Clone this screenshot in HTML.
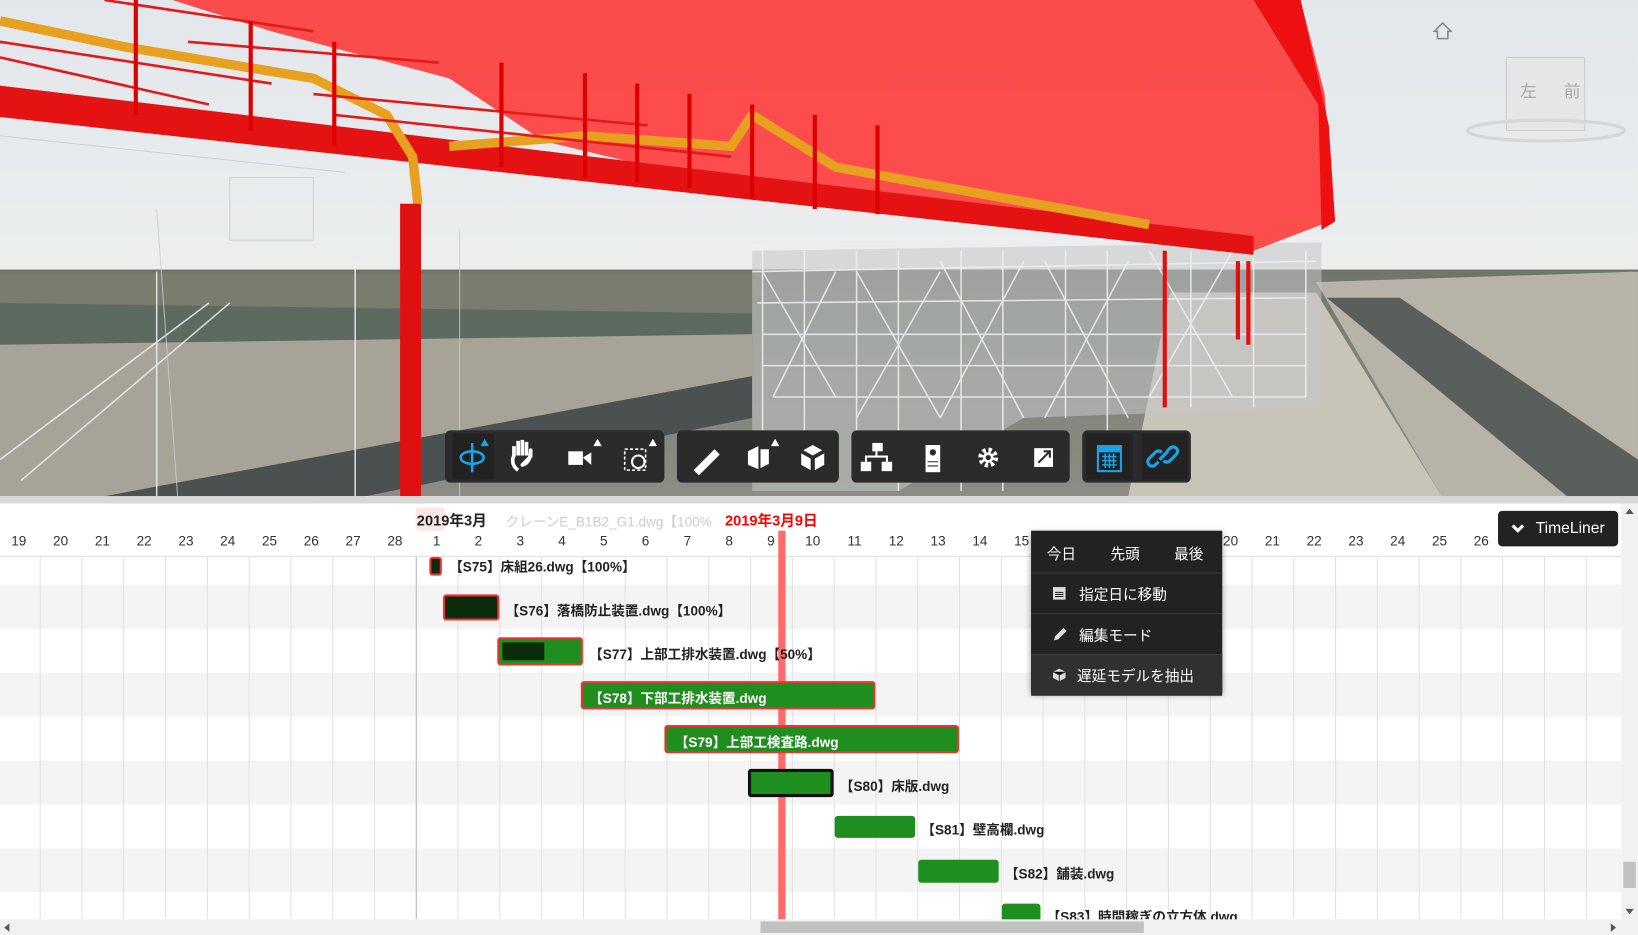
<!DOCTYPE html>
<html><head><meta charset="utf-8">
<style>
html,body{margin:0;padding:0;width:1638px;height:935px;overflow:hidden;background:#fff;font-family:"Liberation Sans","Noto Sans CJK JP",sans-serif}
#w{position:absolute;left:0;top:0;width:1568px;height:895px;transform:scale(1.04464,1.04469);transform-origin:0 0;overflow:hidden}
.abs{position:absolute}
.tb{position:absolute;top:412px;height:50px;background:#2b2b2b;border-radius:5px}
.day{position:absolute;top:510px;width:40px;text-align:center;font-size:13px;color:#333}
.vl{position:absolute;top:533px;height:347px;width:1px;background:#e2e2e2}
.row{position:absolute;left:0;width:1552px;height:42px}
.bar{position:absolute;box-sizing:border-box;border-radius:3px}
.lbl{position:absolute;font-size:13px;font-weight:bold;color:#222;white-space:nowrap}
.menu{position:absolute;left:987px;top:508px;width:183px;height:155px;background:#222;box-shadow:0 2px 6px rgba(0,0,0,.4);color:#fff;font-size:14px}
.mi{position:absolute;left:0;width:183px;height:39px;border-top:1px solid #3c3c3c}
</style></head><body><div id="w">
<svg class="abs" style="left:0;top:0" width="1568" height="475" viewBox="0 0 1568 475">
<defs>
<linearGradient id="sky" x1="0" y1="0" x2="0" y2="1"><stop offset="0" stop-color="#e2e7ec"/><stop offset="1" stop-color="#eceeee"/></linearGradient>
<linearGradient id="gr" x1="0" y1="0" x2="0" y2="1"><stop offset="0" stop-color="#6f746a"/><stop offset="0.4" stop-color="#7e8478"/><stop offset="1" stop-color="#8c8c84"/></linearGradient>
</defs>
<rect width="1568" height="262" fill="url(#sky)"/>
<rect y="258" width="1568" height="217" fill="url(#gr)"/>
<polygon points="0,262 720,262 720,300 0,290" fill="#7a7c70"/>
<polygon points="0,290 720,300 720,330 0,330" fill="#5c6a60"/>
<polygon points="0,330 720,320 720,380 300,475 0,475" fill="#a8a398"/>
<polygon points="100,475 720,360 720,400 350,475" fill="#4b5150"/>
<polygon points="1260,270 1568,260 1568,475 1380,475" fill="#b7b3a8"/>
<polygon points="1270,285 1340,285 1568,440 1568,475 1500,475" fill="#5b5f5c"/>
<polygon points="1120,280 1260,280 1380,475 1080,475" fill="#c9c4b8"/>
<polygon points="720,240 1265,232 1265,390 980,400 860,470 720,470" fill="#c4c6c8" opacity="0.55"/>
<g stroke="#eef0f4" stroke-width="1.5" fill="none" opacity="0.85">
<path d="M720 235 L1260 228 M720 260 L1260 250 M725 290 L1250 285 M730 320 L1250 320 M730 350 L1250 350 M740 380 L1250 380"/>
<path d="M730 260 L800 380 M800 260 L740 380 M820 260 L900 400 M900 260 L820 400 M900 250 L980 400 M980 250 L900 400 M1000 250 L1080 400 M1080 250 L1000 400 M1100 240 L1180 380 M1180 240 L1100 380"/>
<path d="M730 240 V460 M770 240 V460 M820 240 V460 M860 240 V470 M920 240 V470 M960 240 V470 M1020 240 V400 M1060 240 V420 M1140 240 V390 M1200 240 V390 M1250 240 V380"/>
<path d="M0 440 l200 -150 M20 460 l200-170 M150 260 V475 M340 250 V475"/>
</g>
<g stroke="#c8ccd0" stroke-width="1" fill="none" opacity="0.8">
<path d="M0 100 L380 150 M0 130 L330 165 M220 170 H300 V230 H220Z M150 200 L170 475 M440 220 V475"/>
</g>
<polygon points="165,0 1245,0 1268,90 1278,210 1200,240 700,178 520,135 430,75 260,30" fill="#ff3030" opacity="0.85"/>
<polygon points="1200,0 1245,0 1272,120 1278,212 1265,220 1262,100" fill="#ee1010"/>
<polygon points="0,82 1200,226 1200,244 0,112" fill="#e41212"/>
<path d="M0 20 L120 45 L300 75 L370 110 L395 150 L400 195 M430 140 L560 130 L700 140 L720 110 L800 160 L1100 215" stroke="#e8a020" stroke-width="9" fill="none"/>
<path d="M0 40 L260 80 M0 55 L200 100 M100 0 L300 30 M180 40 L420 60 M300 90 L620 120 M320 110 L700 150" stroke="#e41a1a" stroke-width="2.5" fill="none"/>
<rect x="383" y="195" width="20" height="280" fill="#e01010"/>
<path d="M130 0 V110 M240 20 V125 M320 40 V140 M480 60 V160 M560 70 V170 M610 80 V175 M660 90 V180 M720 100 V190 M780 110 V200 M840 120 V205" stroke="#d00" stroke-width="4"/>
<path d="M1115 240 V390 M1185 250 V325 M1195 250 V330" stroke="#e01010" stroke-width="4"/>
<path d="M1381 22 l8 8 h-3 v7 h-10 v-7 h-3 z" fill="none" stroke="#888" stroke-width="1.5"/>
<rect x="1442" y="55" width="75" height="70" fill="#e4e6e8" stroke="#ccc"/>
<text x="1455" y="93" font-size="16" fill="#aaa">左</text><text x="1497" y="93" font-size="16" fill="#aaa">前</text>
<ellipse cx="1480" cy="125" rx="75" ry="10" fill="none" stroke="#d4d6d8" stroke-width="3"/>
</svg>
<div class="abs" style="left:0;top:475px;width:1568px;height:7px;background:#d8d8d8"></div>

<div class="tb" style="left:426px;width:210px"></div>
<div class="tb" style="left:648px;width:155px"></div>
<div class="tb" style="left:815px;width:209px"></div>
<div class="tb" style="left:1036px;width:104px"></div>
<div class="abs" style="left:433px;top:415px;width:40px;height:44px;background:#222"></div>
<div class="abs" style="left:1040px;top:415px;width:44px;height:44px;background:#222"></div>
<div class="abs" style="left:1093px;top:415px;width:44px;height:44px;background:#222"></div>
<svg class="abs" style="left:426px;top:412px" width="720" height="50" fill="none">
<g stroke="#1aa3e8" stroke-width="2.5"><path d="M26 12 V40"/><ellipse cx="26" cy="26" rx="11" ry="6"/></g><path d="M38 8 l4 7 h-8z" fill="#1aa3e8"/>
<path d="M70 38 c-6-4-6-10-4-14 l0-9 m4 9 v-14 m4 14 v-15 m4 15 v-13 m4 14 v-6 c0 6-2 13-8 14z" stroke="#fff" stroke-width="3.5" stroke-linejoin="round"/>
<rect x="118" y="20" width="14" height="13" fill="#fff"/><path d="M132 26 l8-5 v12 z" fill="#fff"/><path d="M146 8 l4 7 h-8z" fill="#fff"/>
<rect x="172" y="18" width="20" height="20" stroke="#fff" stroke-dasharray="3 2" stroke-width="1.5"/><circle cx="185" cy="30" r="6" stroke="#fff" stroke-width="2"/><path d="M199 8 l4 7 h-8z" fill="#fff"/>
<path d="M238 38 l20-20 l5 5 l-20 20z" fill="#fff"/>
<path d="M290 20 l10-5 v22 l-10 -4z M302 18 h8 v14 l-8 4z" fill="#fff"/><path d="M316 8 l4 7 h-8z" fill="#fff"/>
<path d="M352 14 l9 5 l-9 5 l-9-5z M341 22 l9 5 v11 l-9-5z M363 22 l-9 5 v11 l9-5z" fill="#fff"/>
<rect x="398" y="30" width="10" height="9" fill="#fff"/><rect x="418" y="30" width="10" height="9" fill="#fff"/><rect x="409" y="12" width="10" height="8" fill="#fff"/><path d="M413 20 v5 M402 25 h22 M403 25 v5 M423 25 v5" stroke="#fff" stroke-width="2"/>
<rect x="460" y="14" width="14" height="26" fill="#fff"/><circle cx="467" cy="21" r="3" fill="#2b2b2b"/><path d="M462 30 h10 M462 34 h10" stroke="#2b2b2b"/>
<circle cx="520" cy="26" r="7" stroke="#fff" stroke-width="5" stroke-dasharray="3 2.5"/><circle cx="520" cy="26" r="5" fill="#fff"/><circle cx="520" cy="26" r="2.5" fill="#2b2b2b"/>
<rect x="564" y="17" width="18" height="18" fill="#fff"/><path d="M568 31 l11-11 M573 20 h6 v6" stroke="#2b2b2b" stroke-width="2"/>
<rect x="625" y="15" width="22" height="24" stroke="#1aa3e8" stroke-width="2"/><rect x="625" y="15" width="22" height="6" fill="#1aa3e8"/><path d="M629 25 h14 M629 29 h14 M629 33 h14 M632 22 v14 M636 22 v14 M640 22 v14" stroke="#1aa3e8" stroke-width="1.5"/>
<path d="M683 30 l-3 3 a4 4 0 0 1-6-6 l6-6 a4 4 0 0 1 6 0 M691 20 l3-3 a4 4 0 0 1 6 6 l-6 6 a4 4 0 0 1-6 0 M684 28 l8-8" stroke="#1aa3e8" stroke-width="3"/>
</svg>

<div class="abs" style="left:0;top:482px;width:1552px;height:398px;background:#fff"></div>
<div class="row" style="top:560px;background:#f4f4f4"></div>
<div class="row" style="top:644px;background:#f4f4f4"></div>
<div class="row" style="top:728px;background:#f4f4f4"></div>
<div class="row" style="top:812px;background:#f4f4f4"></div>
<div class="abs" style="left:0;top:532px;width:1552px;height:1px;background:#ddd"></div>
<div id="grid"></div>
<div class="abs" style="left:398px;top:486px;width:28px;height:22px;background:#fbe6e6;border-radius:3px"></div>
<div class="abs" style="left:398px;top:533px;width:1px;height:347px;background:#bbb"></div>
<div class="abs" style="left:399px;top:488px;font-size:14px;font-weight:bold;color:#222">2019年3月</div>
<div class="abs" style="left:484px;top:489px;font-size:13px;color:#ccc">クレーンE_B1B2_G1.dwg【100%</div>
<div class="abs" style="left:694px;top:488px;font-size:14px;font-weight:bold;color:#f00">2019年3月9日</div>
<div class="abs" style="left:745px;top:508px;width:7px;height:372px;background:#ff6b6b"></div>

<div class="bar" style="left:411px;top:533px;width:12px;height:18px;background:#0c2a0c;border:2px solid #e33"></div>
<div class="lbl" style="left:430px;top:532px">【S75】床組26.dwg【100%】</div>
<div class="bar" style="left:424px;top:569px;width:54px;height:25px;background:#0c2a0c;border:2px solid #e33"></div>
<div class="lbl" style="left:484px;top:574px">【S76】落橋防止装置.dwg【100%】</div>
<div class="bar" style="left:476px;top:610px;width:82px;height:27px;background:#1e8e1e;border:2px solid #e33"><div style="width:40px;height:17px;margin:3px;background:#0c2a0c"></div></div>
<div class="lbl" style="left:564px;top:616px">【S77】上部工排水装置.dwg【50%】</div>
<div class="bar" style="left:556px;top:652px;width:282px;height:27px;background:#1e8e1e;border:2px solid #e33"></div>
<div class="lbl" style="left:564px;top:658px;color:#fff">【S78】下部工排水装置.dwg</div>
<div class="bar" style="left:636px;top:694px;width:282px;height:27px;background:#1e8e1e;border:2px solid #e33"></div>
<div class="lbl" style="left:646px;top:700px;color:#fff">【S79】上部工検査路.dwg</div>
<div class="bar" style="left:716px;top:736px;width:82px;height:27px;background:#1e8e1e;border:3px solid #111"></div>
<div class="lbl" style="left:804px;top:742px">【S80】床版.dwg</div>
<div class="bar" style="left:799px;top:781px;width:77px;height:21px;background:#1e8e1e"></div>
<div class="lbl" style="left:882px;top:784px">【S81】壁高欄.dwg</div>
<div class="bar" style="left:879px;top:823px;width:77px;height:22px;background:#1e8e1e"></div>
<div class="lbl" style="left:962px;top:826px">【S82】舗装.dwg</div>
<div class="bar" style="left:959px;top:865px;width:37px;height:18px;background:#1e8e1e"></div>
<div class="lbl" style="left:1002px;top:867px">【S83】時間稼ぎの立方体.dwg</div>

<div class="menu">
<div class="abs" style="left:15px;top:12px">今日</div><div class="abs" style="left:76px;top:12px">先頭</div><div class="abs" style="left:137px;top:12px">最後</div>
<div class="mi" style="top:40px"><svg class="abs" style="left:20px;top:12px" width="14" height="14"><rect x="1" y="1" width="12" height="12" fill="#ddd"/><path d="M3 6h8M3 8h8M3 10h8" stroke="#222"/></svg><span class="abs" style="left:46px;top:10px">指定日に移動</span></div>
<div class="mi" style="top:79px"><svg class="abs" style="left:20px;top:12px" width="14" height="14"><path d="M2 13 l1-4 l8-8 l3 3 l-8 8z" fill="#ddd"/></svg><span class="abs" style="left:46px;top:10px">編集モード</span></div>
<div class="mi" style="top:118px;background:#303030"><svg class="abs" style="left:20px;top:12px" width="14" height="14"><path d="M7 1 l6 3 v6 l-6 3 l-6-3 v-6z" fill="#ddd"/><path d="M1 4 l6 3 l6-3 M7 7 v6" stroke="#303030"/></svg><span class="abs" style="left:44px;top:10px">遅延モデルを抽出</span></div>
</div>

<div class="abs" style="left:1434px;top:489px;width:115px;height:34px;background:#222;border-radius:4px;color:#fff;font-size:15px"><svg class="abs" style="left:12px;top:12px" width="14" height="10"><path d="M2 2 l5 5 l5-5" stroke="#fff" stroke-width="3" fill="none"/></svg><span class="abs" style="left:36px;top:8px">TimeLiner</span></div>

<div class="abs" style="left:1552px;top:482px;width:16px;height:398px;background:#f1f1f1"></div>
<div class="abs" style="left:1556px;top:487px;width:0;height:0;border:4px solid transparent;border-bottom:5px solid #555;border-top:0"></div>
<div class="abs" style="left:1554px;top:825px;width:12px;height:25px;background:#c1c1c1"></div>
<div class="abs" style="left:1556px;top:870px;width:0;height:0;border:4px solid transparent;border-top:5px solid #555;border-bottom:0"></div>
<div class="abs" style="left:0;top:880px;width:1568px;height:15px;background:#f1f1f1"></div>
<div class="abs" style="left:728px;top:882px;width:367px;height:11px;background:#c1c1c1"></div>
<div class="abs" style="left:4px;top:884px;width:0;height:0;border:4px solid transparent;border-right:5px solid #555;border-left:0"></div>
<div class="abs" style="left:1542px;top:884px;width:0;height:0;border:4px solid transparent;border-left:5px solid #555;border-right:0"></div>
</div>
<script>
var g=document.getElementById('grid'),h='';
var d=[19,20,21,22,23,24,25,26,27,28,1,2,3,4,5,6,7,8,9,10,11,12,13,14,15,16,17,18,19,20,21,22,23,24,25,26,27,28,29];
for(var i=0;i<d.length;i++){var x=18+40*i;
if(!(x>987&&x<1170)&&x<1430)h+='<div class="day" style="left:'+(x-20)+'px">'+d[i]+'</div>';
h+='<div class="vl" style="left:'+(x+20)+'px"></div>';}
g.innerHTML=h;
</script>
</body></html>
